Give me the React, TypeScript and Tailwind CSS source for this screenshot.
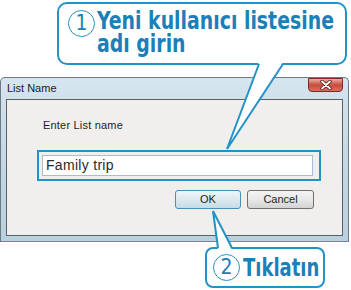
import React from 'react';

// Callout colour used for borders, tails and text
const CY = '#2392c6';

const CloseButton = () => (
  <div className="w-[35px] h-[14px] rounded-b-[4px] border border-[#7a2b22] bg-gradient-to-b from-[#e8aca2] via-[#c74b3d] to-[#d8705f] flex items-center justify-center">
    <svg width="12" height="10" viewBox="0 0 12 10">
      <path d="M2 1.5 L10 8.5 M10 1.5 L2 8.5" stroke="#4a1c16" strokeWidth="3.4" strokeLinecap="round" />
      <path d="M2 1.5 L10 8.5 M10 1.5 L2 8.5" stroke="#ffffff" strokeWidth="1.8" strokeLinecap="round" />
    </svg>
  </div>
);

const Circled = ({ n }: { n: string }) => (
  <div className="w-[27px] h-[27px] shrink-0 rounded-full border-[1.5px] border-[#2392c6] flex items-center justify-center text-[#1c80b8] text-[21px] leading-none font-normal">
    {n}
  </div>
);

export default function App() {
  return (
    <div className="relative w-[351px] h-[290px] overflow-hidden bg-white font-['Liberation_Sans',Arial,sans-serif]">
      {/* Dialog window */}
      <div className="pt-[77px]">
        <div className="w-[349px] h-[165px] rounded-t-[5px] border border-[#6d7a84] border-b-[#3b9cc4] bg-gradient-to-b from-[#d6e5ef] via-[#c4d8e5] to-[#b9d0de] flex flex-col">
          <div className="h-[21px] flex items-start justify-between pl-[6px] pr-[5px]">
            <span className="mt-[4px] text-[11px] leading-[13px] text-[#1a1a1a]">List Name</span>
            <CloseButton />
          </div>
          <div className="mx-[5px] h-[137px] border border-[#5b6067] bg-[#f0efed]">
            <div className="pt-[19px] pl-[36px] text-[11px] leading-[13px] text-[#1e1e1e] tracking-[0.2px]">Enter List name</div>
            <div className="mt-[18px] ml-[30px] w-[284px] h-[31px] border-2 border-[#2392c6] pl-[3px] pr-[6px] pt-[3px]">
              <div className="h-[21px] border border-[#abbdc9] bg-white pl-[3px] flex items-center text-[14px] text-[#2a2a2a] tracking-[0.3px]">
                Family trip
              </div>
            </div>
            <div className="mt-[9px] pl-[168px] flex gap-[6px]">
              <div className="w-[66px] h-[19px] rounded-[3px] border border-[#4a8fb8] bg-gradient-to-b from-[#eef7fb] via-[#dbe9ef] to-[#c6dce6] flex items-center justify-center text-[11px] text-[#1e1e1e]">
                OK
              </div>
              <div className="w-[67px] h-[19px] rounded-[3px] border border-[#707070] bg-gradient-to-b from-[#f4f4f4] via-[#e8e8e8] to-[#d3d3d3] flex items-center justify-center text-[11px] text-[#1e1e1e]">
                Cancel
              </div>
            </div>
          </div>
        </div>
      </div>

      {/* Callout 1 */}
      <div className="absolute left-[57px] top-[2px] w-[290px] h-[63px] rounded-[10px] border-2 border-[#2392c6] bg-white pl-[9px] pt-[6px] flex gap-[2px] font-['DejaVu_Sans_Condensed','DejaVu_Sans',sans-serif] font-bold text-[#1c80b8]">
        <Circled n="1" />
        <div className="text-[25px] leading-[23px] -mt-[1px] whitespace-nowrap origin-left scale-x-[0.84]">
          <div>Yeni kullanıcı listesine</div>
          <div>adı girin</div>
        </div>
      </div>

      {/* Callout 2 */}
      <div className="absolute left-[205px] top-[247px] w-[120px] h-[41px] rounded-[8px] border-2 border-[#2392c6] bg-white pl-[6px] flex items-center gap-[3px] font-['DejaVu_Sans_Condensed','DejaVu_Sans',sans-serif] font-bold text-[#1c80b8]">
        <Circled n="2" />
        <span className="text-[25px] leading-none whitespace-nowrap origin-left scale-x-[0.8]">Tıklatın</span>
      </div>

      {/* Callout tails */}
      <svg className="absolute inset-0 pointer-events-none" width="351" height="290" viewBox="0 0 351 290">
        <polygon points="259,62 283,62 227,149" fill="#ffffff" />
        <path d="M259 64 L227 149 L283 64" fill="none" stroke={CY} strokeWidth="2" strokeLinejoin="miter" />
        <polygon points="213,211 218,250 232,250" fill="#ffffff" />
        <path d="M218 248 L213 211 L232 248" fill="none" stroke={CY} strokeWidth="2" strokeLinejoin="miter" />
      </svg>
    </div>
  );
}
